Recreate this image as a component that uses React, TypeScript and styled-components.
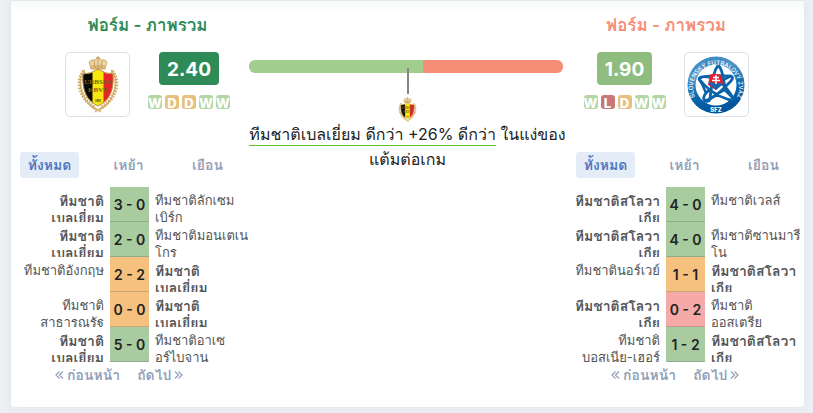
import React, { useState } from "react";
import styled, { createGlobalStyle } from "styled-components";

type Result = "W" | "D" | "L";
type Side = "home" | "away";
interface Match {
  home: string[];
  away: string[];
  score: string;
  result: Result;
  own: Side;
}

const GlobalStyle = createGlobalStyle`
  * { box-sizing: border-box; }
  body {
    margin: 0;
    background: #ecf0f4;
    color: #222;
    font-family: Inter, Loma, "Noto Sans Thai", sans-serif;
    font-size: 14px;
  }
  button { font-family: inherit; border: 0; background: none; padding: 0; cursor: pointer; }
`;

const Page = styled.main`
  padding: 0 9px 6px 11px;
`;
const Card = styled.section`
  display: grid;
  grid-template-columns: minmax(0, 238fr) minmax(0, 314fr) minmax(0, 241fr);
  padding: 13px 0 20px;
  background: linear-gradient(#e6e8f0 0 1px, #f8fafa 1px, #fff 14px);
  border-radius: 0 0 4px 4px;
  box-shadow: 0 0 10px rgba(60, 80, 120, 0.08);
`;
const TeamColumn = styled.div``;
const Summary = styled.header<{ $side: Side }>`
  height: 139px;
  padding: ${(p) => (p.$side === "home" ? "0 0 0 35px" : "0 35px 0 0")};
`;
const Title = styled.h2<{ $side: Side }>`
  margin: 0 0 15px;
  font-size: 17px;
  line-height: 24px;
  font-weight: 600;
  text-align: center;
  color: ${(p) => (p.$side === "home" ? "#2e8b57" : "#f58d77")};
`;
const TeamLine = styled.div<{ $side: Side }>`
  display: flex;
  flex-direction: ${(p) => (p.$side === "home" ? "row" : "row-reverse")};
  justify-content: center;
  gap: 18px;
`;
const CrestFrame = styled.div`
  display: flex;
  align-items: center;
  justify-content: center;
  width: 65px;
  height: 65px;
  border: 1px solid #dcdfe8;
  border-radius: 5px;
  background: #fff;
`;
const Rating = styled.div`
  display: flex;
  flex-direction: column;
  align-items: center;
  gap: 10px;
`;
const Points = styled.strong<{ $side: Side }>`
  padding: 0 8px;
  border-radius: 4px;
  font-size: 19px;
  line-height: 35px;
  height: 33px;
  font-weight: 700;
  color: #fff;
  background: ${(p) => (p.$side === "home" ? "#2e8b57" : "#8fbc7f")};
`;
const FormList = styled.div`
  display: flex;
  gap: 3px;
`;
const formColors: Record<Result, string> = { W: "#b4d6a7", D: "#e8bf7e", L: "#c97777" };
const FormMark = styled.span<{ $result: Result }>`
  width: 14px;
  height: 14px;
  border-radius: 3px;
  font-size: 13px;
  line-height: 16px;
  font-weight: 800;
  display: flex;
  justify-content: center;
  color: #fff;
  background: ${(p) => formColors[p.$result]};
`;

const Comparison = styled.div`
  display: flex;
  flex-direction: column;
  align-items: center;
  padding-top: 47px;
`;
const Bar = styled.div`
  display: flex;
  width: 100%;
  height: 13px;
  border-radius: 6px;
  overflow: hidden;
`;
const Share = styled.div<{ $side: Side; $weight: number }>`
  flex: ${(p) => p.$weight};
  background: ${(p) => (p.$side === "home" ? "#a1cd8f" : "#f58d77")};
`;
const Explanation = styled.div`
  display: flex;
  flex-direction: column;
  align-items: center;
  padding-left: 3px;
`;
const Needle = styled.div`
  width: 2px;
  height: 26px;
  margin: -5px 0 3px;
  background: #858585;
  z-index: 1;
`;
const Verdict = styled.p`
  margin: 0;
  font-size: 16px;
  line-height: 25px;
  text-align: center;
  white-space: nowrap;
`;
const Advantage = styled.span`
  display: inline-block;
  line-height: 22px;
  border-bottom: 1px solid #62c02c;
`;

const Results = styled.div<{ $side: Side }>`
  padding: ${(p) => (p.$side === "home" ? "0 0 0 9px" : "0 4px 0 13px")};
`;
const Tabs = styled.div`
  display: flex;
  gap: 20px;
  margin-bottom: 9px;
`;
const Tab = styled.button<{ $active: boolean }>`
  width: 59px;
  height: 26px;
  border-radius: 3px;
  font-size: 14px;
  line-height: 26px;
  font-weight: 600;
  white-space: nowrap;
  color: ${(p) => (p.$active ? "#4f78bd" : "#929fb8")};
  && { background: ${(p) => (p.$active ? "#e4edf7" : "transparent")}; }
`;
const MatchTable = styled.table`
  width: 100%;
  table-layout: fixed;
  border-collapse: collapse;
`;
const TeamCell = styled.td<{ $side: Side; $own: boolean }>`
  width: ${(p) => (p.$side === "home" ? "90px" : "auto")};
  padding: 0 6px;
  ${(p) => (p.$side === "home" ? "padding-left: 0;" : "padding-right: 0;")}
  text-align: ${(p) => (p.$side === "home" ? "right" : "left")};
  font-size: ${(p) => (p.$own ? 14 : 13)}px;
  font-weight: ${(p) => (p.$own ? 600 : 400)};
  color: #555;
`;
const TeamName = styled.div<{ $side: Side }>`
  display: flex;
  flex-direction: column;
  align-items: ${(p) => (p.$side === "home" ? "flex-end" : "flex-start")};
  height: 35px;
  padding-top: 5px;
  overflow: hidden;
  line-height: 17px;
  white-space: nowrap;
`;
const scoreColors: Record<Result, string> = { W: "#a8cb9f", D: "#f6c17f", L: "#f6aaa8" };
const Score = styled.td<{ $result: Result }>`
  width: 39px;
  height: 35px;
  padding: 0;
  box-shadow: inset 0 -1px rgba(80, 80, 80, 0.25);
  background: ${(p) => scoreColors[p.$result]};
  text-align: center;
  font-size: 14px;
  font-weight: 600;
  white-space: nowrap;
`;
const Pager = styled.nav`
  display: flex;
  gap: 17px;
  margin: 1px 0 0 35px;
`;
const PageButton = styled.button`
  display: flex;
  align-items: center;
  gap: 3px;
  height: 24px;
  font-size: 14px;
  font-weight: 600;
  white-space: nowrap;
  && { color: #929fb8; }
`;
const Chevrons = ({ next = false }: { next?: boolean }) => (
  <svg width="9" height="10" viewBox="0 0 9 10" fill="none" stroke="currentColor" strokeWidth="1.2" aria-hidden="true">
    <path d={next ? "M1 1.5 4.5 5 1 8.5M4.5 1.5 8 5 4.5 8.5" : "M4.5 1.5 1 5 4.5 8.5M8 1.5 4.5 5 8 8.5"} />
  </svg>
);

const BelgiumCrest = ({ width, height }: { width: number; height: number }) => (
  <svg width={width} height={height} viewBox="0 0 42 57" role="img" aria-label="ทีมชาติเบลเยี่ยม">
    <g fill="none" stroke="#d2ab66">
      <path d="M8 14C0 21 1 42 19 54M34 14C42 21 41 42 23 54" strokeWidth="1.2" />
      <path d="M7 15C-1 25 2 41 17 51M35 15C43 25 40 41 25 51" strokeWidth="4" strokeDasharray="1.6 1.3" />
      <path d="M15 50 24 56M27 50 18 56" strokeWidth="1.4" />
    </g>
    <path d="M14 13 12 6Q14 3 18 4L21 1 24 4Q28 3 30 6L28 13Z" fill="#ecd5a5" stroke="#c79b52" strokeWidth=".8" />
    <path d="M21 0V12M17 5 18 12M25 5 24 12M14 10H28M14 12H28M19 2H23" stroke="#bf9349" strokeWidth=".8" />
    <path d="M6 18Q14 18 21 13Q28 18 36 18C37 34 33 44 21 50C9 44 5 34 6 18Z" fill="#f9e80d" />
    <path d="M6 18Q11 18 15.5 16.5V47C8 41 5 32 6 18Z" fill="#090909" />
    <path d="M26.5 16.5Q31 18 36 18C37 32 34 41 26.5 47Z" fill="#e8232a" />
    <path d="M6 18Q14 18 21 13Q28 18 36 18C37 34 33 44 21 50C9 44 5 34 6 18Z" fill="none" stroke="#b98b3b" />
    <g fontFamily="Liberation Serif, serif" fontWeight="700" fill="#806012" textAnchor="middle">
      <text x="21" y="28" fontSize="7">URBSFA</text>
      <text x="21" y="36" fontSize="7">KBVB</text>
      <text x="21" y="46" fontSize="3" fill="#222">1895</text>
    </g>
  </svg>
);

const SlovakiaCrest = () => (
  <svg width="58" height="58" viewBox="0 0 58 58" role="img" aria-label="ทีมชาติสโลวาเกีย">
    <defs>
      <linearGradient id="ring" x1="0" y1="0" x2="0.3" y2="1">
        <stop offset="0" stopColor="#2f86c1" />
        <stop offset=".35" stopColor="#4f94c6" />
        <stop offset=".7" stopColor="#0867ad" />
        <stop offset="1" stopColor="#00549c" />
      </linearGradient>
      <path id="arc" d="M15 50A23 23 0 1 1 43 50" />
    </defs>
    <circle cx="29" cy="29" r="28.5" fill="url(#ring)" />
    <circle cx="29" cy="29" r="20.5" fill="#fff" />
    <path
      d="M31.500 9.500Q26 13 23 43Q22 46 18 45Q15 42 19 37Q28 27 44 20Q47 21 44 25Q38 31 34 35Q28 41 18 45M31.500 9.500Q36 14 38 34Q42 38 46 42Q45 45 40 43Q24 38 12 23Q13 20 22 21Q34 22 46 42"
      fill="none"
      stroke="#0863aa"
      strokeWidth="2.800"
      strokeLinejoin="round"
    />
    <path d="M12 23Q18 18 44 20M12 23Q16 29 19 37M23 43Q30 37 38 34" fill="none" stroke="#0863aa" strokeWidth="2.400" />
    <path d="M23 19Q28 16 35 20L36 28 29 34 21 29Z" fill="#e31f32" />
    <path d="M21 27Q25 25 29 28Q33 26 36 28L29 34Z" fill="#1666ad" />
    <path d="M29 19V28M26 21.5H32M25 24.5H33" stroke="#fff" strokeWidth="1.5" />
    <g fill="#fff" fontFamily="Inter, sans-serif" fontWeight="500">
      <text fontSize="6"><textPath href="#arc" startOffset="50%" textAnchor="middle">SLOVENSKÝ FUTBALOVÝ ZVÄZ</textPath></text>
      <text x="29" y="56" fontSize="6" fontWeight="800" textAnchor="middle">SFZ</text>
    </g>
  </svg>
);

const BEL = ["ทีมชาติ", "เบลเยี่ยม"];
const SVK = ["ทีมชาติสโลวา", "เกีย"];
const homeMatches: Match[] = [
  { home: BEL, away: ["ทีมชาติลักเซม", "เบิร์ก"], score: "3 - 0", result: "W", own: "home" },
  { home: BEL, away: ["ทีมชาติมอนเตเน", "โกร"], score: "2 - 0", result: "W", own: "home" },
  { home: ["ทีมชาติอังกฤษ"], away: BEL, score: "2 - 2", result: "D", own: "away" },
  { home: ["ทีมชาติ", "สาธารณรัฐ"], away: BEL, score: "0 - 0", result: "D", own: "away" },
  { home: BEL, away: ["ทีมชาติอาเซ", "อร์ไบจาน"], score: "5 - 0", result: "W", own: "home" },
];
const awayMatches: Match[] = [
  { home: SVK, away: ["ทีมชาติเวลส์"], score: "4 - 0", result: "W", own: "home" },
  { home: SVK, away: ["ทีมชาติซานมารี", "โน"], score: "4 - 0", result: "W", own: "home" },
  { home: ["ทีมชาตินอร์เวย์"], away: SVK, score: "1 - 1", result: "D", own: "away" },
  { home: SVK, away: ["ทีมชาติ", "ออสเตรีย"], score: "0 - 2", result: "L", own: "home" },
  { home: ["ทีมชาติ", "บอสเนีย-เฮอร์"], away: SVK, score: "1 - 2", result: "W", own: "away" },
];
const tabNames = ["ทั้งหมด", "เหย้า", "เยือน"];

interface TeamProps {
  side: Side;
  points: string;
  form: Result[];
  matches: Match[];
  crest: React.ReactNode;
}
function Team({ side, points, form, matches, crest }: TeamProps) {
  const [tab, setTab] = useState(0);
  return (
    <TeamColumn>
      <Summary $side={side}>
        <Title $side={side}>ฟอร์ม - ภาพรวม</Title>
        <TeamLine $side={side}>
          <CrestFrame>{crest}</CrestFrame>
          <Rating>
            <Points $side={side}>{points}</Points>
            <FormList>
              {form.map((r, i) => <FormMark key={i} $result={r}>{r}</FormMark>)}
            </FormList>
          </Rating>
        </TeamLine>
      </Summary>
      <Results $side={side}>
        <Tabs>
          {tabNames.map((name, i) => (
            <Tab key={name} $active={i === tab} onClick={() => setTab(i)}>{name}</Tab>
          ))}
        </Tabs>
        <MatchTable>
          <tbody>
            {matches.map((m, i) => (
              <tr key={i}>
                <TeamCell $side="home" $own={m.own === "home"}>
                  <TeamName $side="home">{m.home.map((l) => <span key={l}>{l}</span>)}</TeamName>
                </TeamCell>
                <Score $result={m.result}>{m.score}</Score>
                <TeamCell $side="away" $own={m.own === "away"}>
                  <TeamName $side="away">{m.away.map((l) => <span key={l}>{l}</span>)}</TeamName>
                </TeamCell>
              </tr>
            ))}
          </tbody>
        </MatchTable>
        <Pager>
          <PageButton><Chevrons />ก่อนหน้า</PageButton>
          <PageButton>ถัดไป<Chevrons next /></PageButton>
        </Pager>
      </Results>
    </TeamColumn>
  );
}

export default function App() {
  return (
    <Page>
      <GlobalStyle />
      <Card>
        <Team side="home" points="2.40" form={["W", "D", "D", "W", "W"]} matches={homeMatches} crest={<BelgiumCrest width={42} height={57} />} />
        <Comparison>
          <Bar>
            <Share $side="home" $weight={174} />
            <Share $side="away" $weight={140} />
          </Bar>
          <Explanation>
            <Needle />
            <BelgiumCrest width={19} height={25} />
            <Verdict>
              <Advantage>ทีมชาติเบลเยี่ยม ดีกว่า +26% ดีกว่า</Advantage> ในแง่ของ<br />แต้มต่อเกม
            </Verdict>
          </Explanation>
        </Comparison>
        <Team side="away" points="1.90" form={["W", "L", "D", "W", "W"]} matches={awayMatches} crest={<SlovakiaCrest />} />
      </Card>
    </Page>
  );
}
